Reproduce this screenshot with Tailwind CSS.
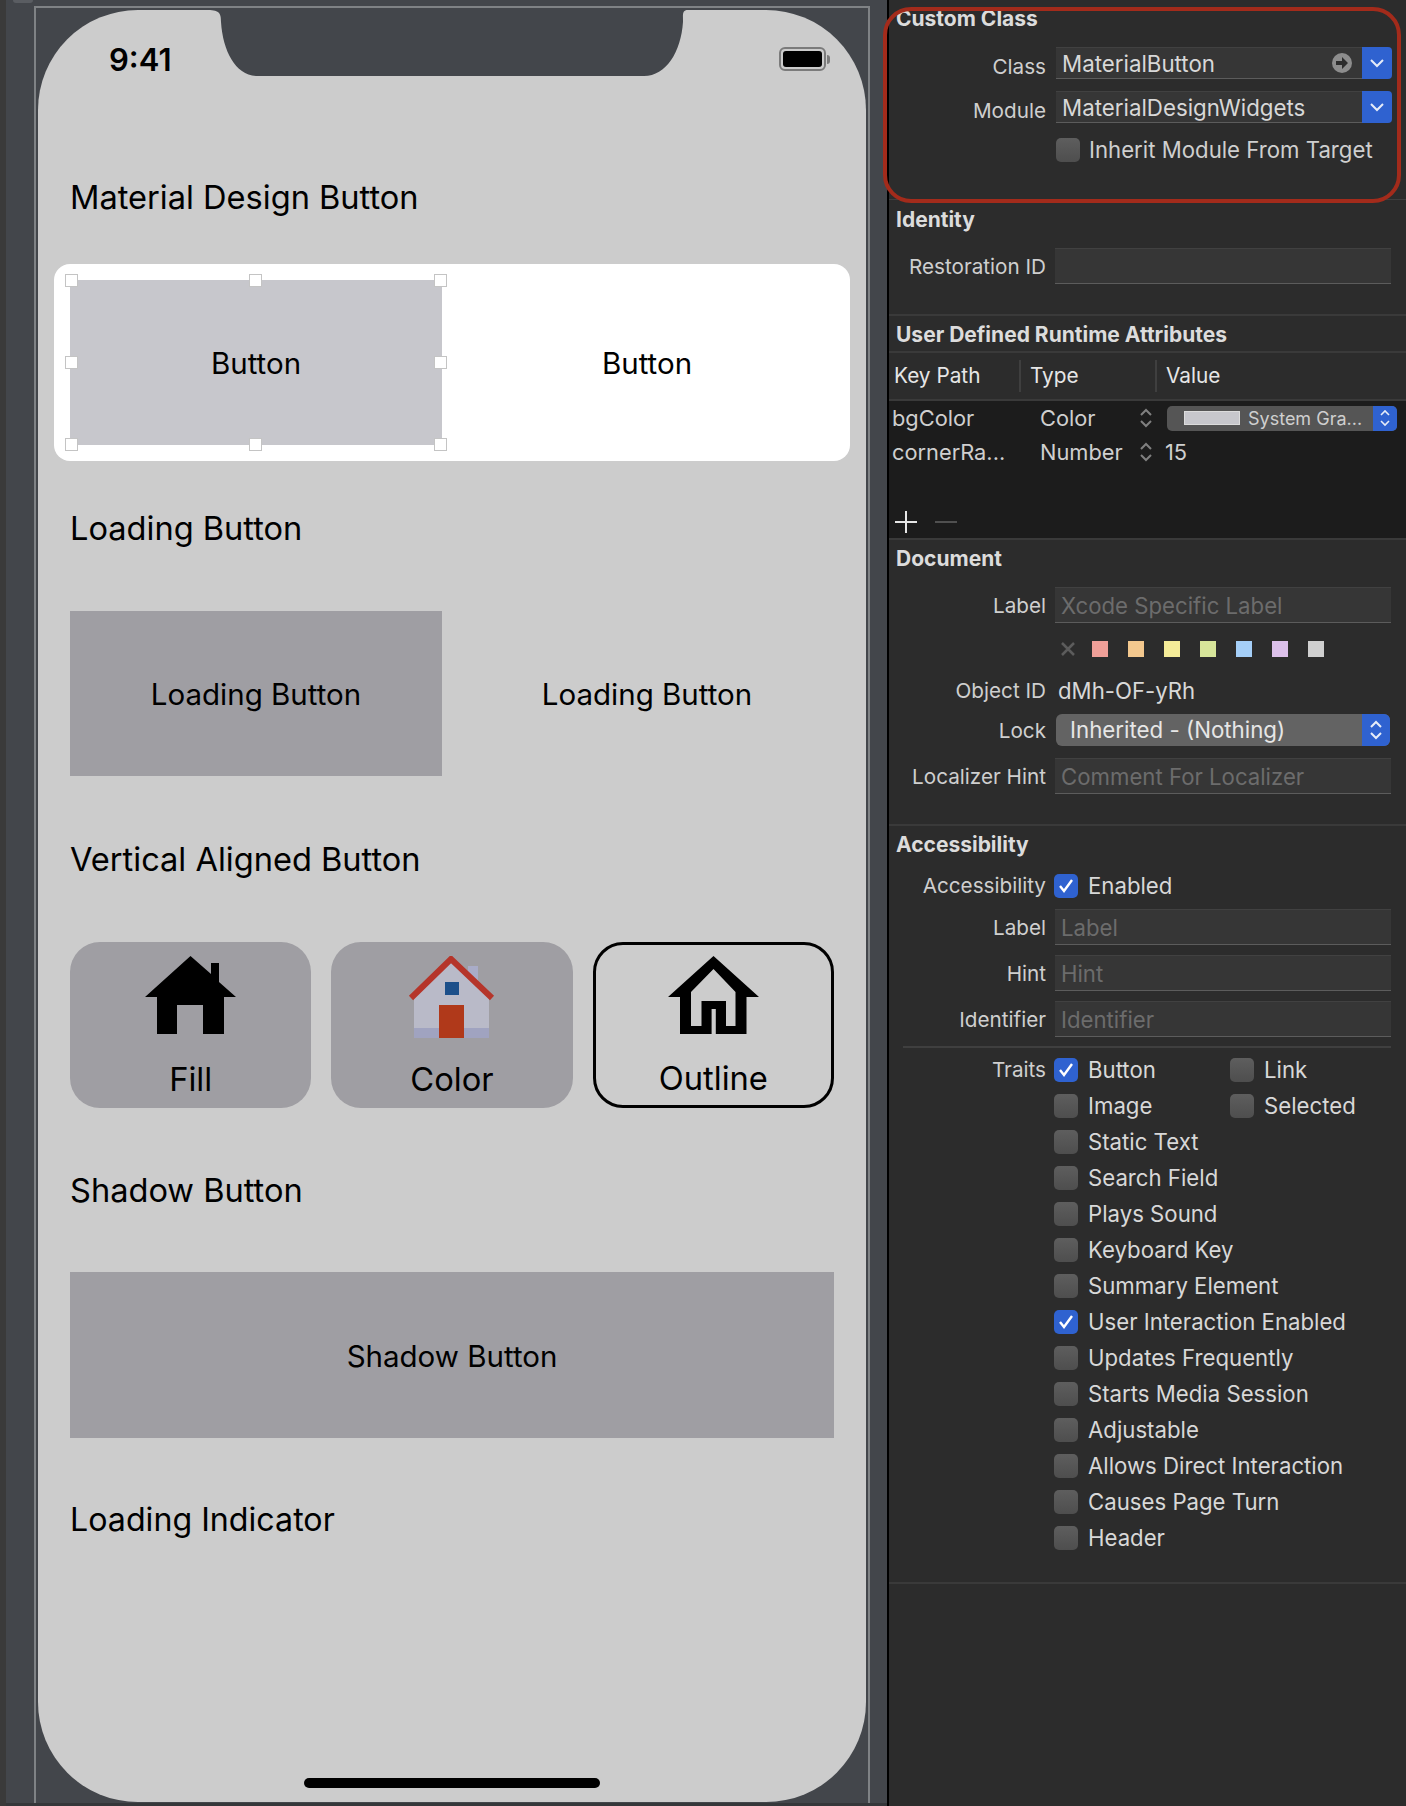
<!DOCTYPE html>
<html lang="en">
  <head>
    <meta charset="UTF-8" />
    <title>Interface Builder</title>
    <script src="https://cdn.jsdelivr.net/npm/@tailwindcss/browser@4"></script>
  </head>
  <body class="w-[1406px] h-[1806px] overflow-hidden bg-[#43464b] font-['Inter',sans-serif]">
    <div class="flex h-[1806px]">

      <!-- canvas -->
      <div class="relative w-[887px] h-[1806px] bg-[#43464b] pt-[6px] pl-[34px] border-l-[6px] border-[#3a3a3a] box-border">
        <div class="absolute left-[7px] top-0 w-[20px] h-[3px] rounded-b bg-[#5a5d62]"></div>
        <div class="absolute left-0 right-0 bottom-0 h-[3px] bg-[#35373a]"></div>
        <div class="-ml-[6px] w-[836px] h-[1797px] border-l-2 border-r-2 border-t-2 border-[#7f8285] pl-[2px] pt-[2px]">

          <!-- phone -->
          <div class="relative w-[828px] h-[1792px] rounded-[100px] bg-[#cccccc] overflow-hidden text-black">
            <!-- notch -->
            <svg class="absolute left-[170px] top-0" width="480" height="67" viewBox="0 0 480 67">
              <path fill="#43464b" d="M0,0 H480 C474,0 475,4 475,12 C473,42 458,66 436,66 H50 C28,66 15,42 13,12 C13,4 12,0 0,0 Z" />
            </svg>

            <!-- status bar -->
            <div class="flex justify-between h-[163px] pt-[32px] pl-[71px] pr-[36px]">
              <span class="text-[31px] leading-[36px] font-semibold">9:41</span>
              <div class="flex items-center h-[24px] mt-[5px]">
                <div class="w-[47px] h-[24px] rounded-[6px] border-2 border-[#7b7b7b] p-[2px]"><div class="w-full h-full rounded-[3px] bg-black"></div></div>
                <div class="w-[3px] h-[9px] ml-[1px] rounded-r bg-[#7b7b7b]"></div>
              </div>
            </div>

            <div class="pl-[32px] pr-[32px]">
              <!-- material design button -->
              <div class="h-[48px] flex items-center text-[32.6px]">Material Design Button</div>
              <div class="relative mt-[59px] grid grid-cols-[372px_1fr] gap-[18px] h-[165px] text-[29.5px]">
                <div class="absolute -left-[16px] -right-[16px] -top-[16px] -bottom-[16px] rounded-[16px] bg-white"></div>
                <div class="relative bg-[#c7c7cc] flex items-center justify-center pt-[2px]">Button
                  <span class="absolute -left-[5px] -top-[6px] w-[13px] h-[13px] bg-white border border-[#c4c4c4]"></span>
                  <span class="absolute left-[179px] -top-[6px] w-[13px] h-[13px] bg-white border border-[#c4c4c4]"></span>
                  <span class="absolute -right-[5px] -top-[6px] w-[13px] h-[13px] bg-white border border-[#c4c4c4]"></span>
                  <span class="absolute -left-[5px] top-[76px] w-[13px] h-[13px] bg-white border border-[#c4c4c4]"></span>
                  <span class="absolute -right-[5px] top-[76px] w-[13px] h-[13px] bg-white border border-[#c4c4c4]"></span>
                  <span class="absolute -left-[5px] -bottom-[6px] w-[13px] h-[13px] bg-white border border-[#c4c4c4]"></span>
                  <span class="absolute left-[179px] -bottom-[6px] w-[13px] h-[13px] bg-white border border-[#c4c4c4]"></span>
                  <span class="absolute -right-[5px] -bottom-[6px] w-[13px] h-[13px] bg-white border border-[#c4c4c4]"></span>
                </div>
                <div class="relative flex items-center justify-center pt-[2px]">Button</div>
              </div>

              <!-- loading button -->
              <div class="mt-[59px] h-[48px] flex items-center text-[32.6px]">Loading Button</div>
              <div class="mt-[59px] grid grid-cols-[372px_1fr] gap-[18px] h-[165px] text-[29.5px]">
                <div class="bg-[#9f9ea3] flex items-center justify-center pt-[2px]">Loading Button</div>
                <div class="flex items-center justify-center pt-[2px]">Loading Button</div>
              </div>

              <!-- vertical aligned button -->
              <div class="mt-[59px] h-[48px] flex items-center text-[32.6px]">Vertical Aligned Button</div>
              <div class="mt-[59px] grid grid-cols-3 gap-[20px] h-[166px] text-[32.7px]">
                <div class="relative rounded-[30px] bg-[#9f9ea3] flex flex-col items-center pt-[14px]">
                  <svg width="91" height="78" viewBox="0 0 91 78"><path d="M45.5,0 L66,18 V7 H74,V26 L91,41 H79 V78 H58 V49 H32 V78 H12 V41 H0 Z" /></svg>
                  <span class="mt-[23px] leading-[44px]">Fill</span>
                </div>
                <div class="relative rounded-[30px] bg-[#9f9ea3] flex flex-col items-center pt-[14px]">
                  <svg width="91" height="82" viewBox="0 0 91 82">
                    <rect x="62" y="10" width="10" height="30" fill="#a9acc8" />
                    <path fill="#b9bac8" d="M45,6 L83,42 V72 H8 V42 Z" />
                    <rect x="8" y="72" width="75" height="10" fill="#a0a3c0" />
                    <rect x="39" y="26" width="14" height="13" fill="#1c4f8a" />
                    <rect x="33" y="49" width="25" height="33" fill="#b0391a" />
                    <path fill="none" stroke="#b5352a" stroke-width="6" d="M5,42 L45,3 L86,42" />
                  </svg>
                  <span class="mt-[19px] leading-[44px]">Color</span>
                </div>
                <div class="relative rounded-[30px] border-[3px] border-black flex flex-col items-center pt-[11px]">
                  <svg width="91" height="78" viewBox="0 0 91 78"><path fill-rule="evenodd" d="M45.5,0 L91,41 H78.5 V78 H47.8 V53 H43.6 V78 H12 V41 H0 Z M45.5,13 L67.5,36 V70 H58 V45 H33.5 V70 H23 V36 Z" /></svg>
                  <span class="mt-[22px] leading-[44px]">Outline</span>
                </div>
              </div>

              <!-- shadow button -->
              <div class="mt-[58px] h-[48px] flex items-center text-[32.6px]">Shadow Button</div>
              <div class="mt-[58px] h-[166px] bg-[#9f9ea3] flex items-center justify-center pt-[2px] text-[29.5px]">Shadow Button</div>

              <!-- loading indicator -->
              <div class="mt-[58px] h-[48px] flex items-center text-[32.2px]">Loading Indicator</div>
            </div>

            <div class="absolute left-[266px] top-[1768px] w-[296px] h-[10px] rounded-full bg-black"></div>
          </div>
        </div>
      </div>

      <!-- inspector -->
      <div class="relative w-[519px] h-[1806px] border-l-2 border-black bg-[#2c2c2c] text-[20.7px] text-[#cfcfcf] box-border">
        <div class="absolute -left-[6px] top-[7px] w-[518px] h-[196px] rounded-[28px] border-[4px] border-[#a32b1b]"></div>

        <!-- custom class -->
        <section class="h-[200px] border-b border-[#3f3f3f] pl-[9px]">
          <h2 class="-ml-[2px] h-[38px] flex items-center text-[21px] font-bold text-[#dcdcdc]">Custom Class</h2>
          <div class="mt-[9px] flex items-center h-[32px]">
            <span class="w-[148px] text-right pt-[7px]">Class</span>
            <div class="ml-[10px] w-[336px] h-[32px] flex">
              <div class="flex-1 flex items-center justify-between pl-[6px] pr-[10px] bg-[#363636] border-t border-[#414141] border-b border-b-[#5c5c5c] text-[22.3px] text-[#d8d8d8]"><span class="pt-[2px]">MaterialButton</span>
                <svg width="20" height="20" viewBox="0 0 20 20"><circle cx="10" cy="10" r="10" fill="#8d8d8d" /><path fill="#2c2c2c" d="M4,8 H10 V4 L16,10 L10,16 V12 H4 Z" /></svg>
              </div>
              <div class="w-[30px] flex items-center justify-center rounded-r-[4px] bg-[#2f62d0]"><svg width="14" height="10" viewBox="0 0 14 10"><path fill="none" stroke="#e6ecf8" stroke-width="2" d="M1,2 L7,8 L13,2" /></svg></div>
            </div>
          </div>
          <div class="mt-[12px] flex items-center h-[32px]">
            <span class="w-[148px] text-right pt-[7px]">Module</span>
            <div class="ml-[10px] w-[336px] h-[32px] flex">
              <div class="flex-1 flex items-center pl-[6px] pt-[2px] bg-[#363636] border-t border-[#414141] border-b border-b-[#5c5c5c] text-[22.3px] text-[#d8d8d8]">MaterialDesignWidgets</div>
              <div class="w-[30px] flex items-center justify-center rounded-r-[4px] bg-[#2f62d0]"><svg width="14" height="10" viewBox="0 0 14 10"><path fill="none" stroke="#e6ecf8" stroke-width="2" d="M1,2 L7,8 L13,2" /></svg></div>
            </div>
          </div>
          <div class="mt-[15px] ml-[158px] flex items-center h-[24px]">
            <div class="w-[24px] h-[24px] rounded-[5px] bg-linear-to-b from-[#5e5e5e] to-[#4e4e4e]"></div>
            <span class="ml-[9px] text-[22.2px]">Inherit Module From Target</span>
          </div>
        </section>

        <!-- identity -->
        <section class="h-[116px] border-b-2 border-[#3a3a3a] pl-[9px]">
          <h2 class="-ml-[2px] h-[40px] flex items-center text-[21px] font-bold text-[#dcdcdc]">Identity</h2>
          <div class="mt-[8px] flex items-center h-[36px]">
            <span class="w-[148px] text-right pt-[2px]">Restoration ID</span>
            <div class="ml-[9px] w-[336px] h-[36px] bg-[#363636] border-t border-[#414141] border-b border-b-[#5c5c5c]"></div>
          </div>
        </section>

        <!-- runtime attributes -->
        <section class="h-[37px] border-b-2 border-[#3a3a3a] pl-[7px]">
          <h2 class="h-[37px] flex items-center text-[21px] font-bold text-[#dcdcdc]">User Defined Runtime Attributes</h2>
        </section>
        <div class="h-[48px] flex items-center border-b-2 border-[#3a3a3a] text-[20.8px] text-[#e6e6e6]">
          <span class="w-[132px] pl-[5px] h-[32px] flex items-center border-r-2 border-[#3f3f3f]">Key Path</span>
          <span class="w-[136px] pl-[9px] h-[32px] flex items-center border-r-2 border-[#3f3f3f]">Type</span>
          <span class="pl-[9px]">Value</span>
        </div>
        <div class="h-[139px] bg-[#1c1c1c] border-b-2 border-[#3a3a3a] text-[21.8px] text-[#cfcfcf]">
          <div class="flex items-center h-[34px]">
            <span class="w-[151px] pl-[3px]">bgColor</span>
            <span class="w-[99px]">Color</span>
            <svg width="14" height="22" viewBox="0 0 14 22"><path fill="none" stroke="#808080" stroke-width="2" d="M2,8 L7,3 L12,8 M2,14 L7,19 L12,14" /></svg>
            <div class="ml-[14px] w-[230px] h-[25px] flex rounded-[5px] overflow-hidden bg-[#555555] text-[18px]">
              <div class="flex-1 flex items-center pl-[17px]">
                <div class="w-[56px] h-[14px] bg-[#c7c7cc] border border-[#dcdcdc]"></div>
                <span class="ml-[8px]">System Gra...</span>
              </div>
              <div class="w-[24px] flex items-center justify-center bg-[#2f62d0]"><svg width="12" height="20" viewBox="0 0 12 20"><path fill="none" stroke="#e6ecf8" stroke-width="1.6" d="M2,7 L6,3 L10,7 M2,13 L6,17 L10,13" /></svg></div>
            </div>
          </div>
          <div class="flex items-center h-[34px]">
            <span class="w-[151px] pl-[3px]">cornerRa...</span>
            <span class="w-[99px]">Number</span>
            <svg width="14" height="22" viewBox="0 0 14 22"><path fill="none" stroke="#808080" stroke-width="2" d="M2,8 L7,3 L12,8 M2,14 L7,19 L12,14" /></svg>
            <span class="ml-[12px]">15</span>
          </div>
          <div class="mt-[36px] flex items-center pl-[6px] h-[34px]">
            <svg width="22" height="22" viewBox="0 0 22 22"><path stroke="#e6e6e6" stroke-width="2" d="M11,0 V22 M0,11 H22" /></svg>
            <div class="ml-[18px] w-[22px] h-[2px] bg-[#505050]"></div>
          </div>
        </div>

        <!-- document -->
        <section class="h-[286px] border-b-2 border-[#3a3a3a] pl-[9px]">
          <h2 class="-ml-[2px] h-[38px] flex items-center text-[21px] font-bold text-[#dcdcdc]">Document</h2>
          <div class="mt-[9px] flex items-center h-[36px]">
            <span class="w-[148px] text-right pt-[2px]">Label</span>
            <div class="ml-[9px] w-[336px] h-[36px] flex items-center pl-[6px] pt-[2px] bg-[#363636] border-t border-[#414141] border-b border-b-[#5c5c5c] text-[22.2px] text-[#6c6c6c]">Xcode Specific Label</div>
          </div>
          <div class="mt-[18px] ml-[163px] flex items-center h-[16px]">
            <svg class="mr-[17px]" width="14" height="14" viewBox="0 0 14 14"><path stroke="#5c5c5c" stroke-width="2.5" d="M1,1 L13,13 M13,1 L1,13" /></svg>
            <div class="w-[16px] h-[16px] bg-[#ef9f98]"></div>
            <div class="ml-[20px] w-[16px] h-[16px] bg-[#f3c88e]"></div>
            <div class="ml-[20px] w-[16px] h-[16px] bg-[#f5ec98]"></div>
            <div class="ml-[20px] w-[16px] h-[16px] bg-[#d7e59a]"></div>
            <div class="ml-[20px] w-[16px] h-[16px] bg-[#a5cff8]"></div>
            <div class="ml-[20px] w-[16px] h-[16px] bg-[#dcc0ea]"></div>
            <div class="ml-[20px] w-[16px] h-[16px] bg-[#d0d0d0]"></div>
          </div>
          <div class="mt-[18px] flex items-center h-[32px]">
            <span class="w-[148px] text-right">Object ID</span>
            <span class="ml-[12px] text-[22.2px] text-[#d8d8d8]">dMh-OF-yRh</span>
          </div>
          <div class="mt-[7px] flex items-center h-[32px]">
            <span class="w-[148px] text-right pt-[1px]">Lock</span>
            <div class="ml-[10px] w-[334px] h-[32px] flex rounded-[6px] overflow-hidden bg-[#636363] text-[22.3px] text-[#e6e6e6]">
              <div class="flex-1 flex items-center pl-[14px]">Inherited - (Nothing)</div>
              <div class="w-[28px] flex items-center justify-center bg-[#2f62d0]"><svg width="14" height="24" viewBox="0 0 14 24"><path fill="none" stroke="#e6ecf8" stroke-width="2" d="M2,9 L7,4 L12,9 M2,15 L7,20 L12,15" /></svg></div>
            </div>
          </div>
          <div class="mt-[12px] flex items-center h-[36px]">
            <span class="w-[148px] text-right pt-[2px]">Localizer Hint</span>
            <div class="ml-[9px] w-[336px] h-[36px] flex items-center pl-[6px] pt-[2px] bg-[#363636] border-t border-[#414141] border-b border-b-[#5c5c5c] text-[22.2px] text-[#6c6c6c]">Comment For Localizer</div>
          </div>
        </section>

        <!-- accessibility -->
        <section class="h-[758px] border-b-2 border-[#3a3a3a] pl-[9px]">
          <h2 class="-ml-[2px] h-[38px] flex items-center text-[21px] font-bold text-[#dcdcdc]">Accessibility</h2>
          <div class="mt-[10px] flex items-center h-[24px]">
            <span class="w-[148px] text-right">Accessibility</span>
            <div class="ml-[8px] w-[24px] h-[24px] rounded-[5px] bg-[#2f62d0] flex items-center justify-center"><svg width="16" height="14" viewBox="0 0 16 14"><path fill="none" stroke="#fff" stroke-width="2.4" d="M2,7 L6,12 L14,1" /></svg></div>
            <span class="ml-[10px] text-[22.2px] text-[#d8d8d8]">Enabled</span>
          </div>
          <div class="mt-[11px] flex items-center h-[36px]">
            <span class="w-[148px] text-right pt-[2px]">Label</span>
            <div class="ml-[9px] w-[336px] h-[36px] flex items-center pl-[6px] pt-[2px] bg-[#363636] border-t border-[#414141] border-b border-b-[#5c5c5c] text-[22.2px] text-[#6c6c6c]">Label</div>
          </div>
          <div class="mt-[10px] flex items-center h-[36px]">
            <span class="w-[148px] text-right pt-[2px]">Hint</span>
            <div class="ml-[9px] w-[336px] h-[36px] flex items-center pl-[6px] pt-[2px] bg-[#363636] border-t border-[#414141] border-b border-b-[#5c5c5c] text-[22.2px] text-[#6c6c6c]">Hint</div>
          </div>
          <div class="mt-[10px] flex items-center h-[36px]">
            <span class="w-[148px] text-right pt-[2px]">Identifier</span>
            <div class="ml-[9px] w-[336px] h-[36px] flex items-center pl-[6px] pt-[2px] bg-[#363636] border-t border-[#414141] border-b border-b-[#5c5c5c] text-[22.2px] text-[#6c6c6c]">Identifier</div>
          </div>
          <div class="mt-[9px] ml-[5px] w-[488px] h-[2px] bg-[#3f3f3f]"></div>

          <!-- traits -->
          <div class="mt-[10px] flex items-center h-[24px] text-[22.2px] text-[#d8d8d8]">
            <span class="w-[148px] text-right text-[20.7px] text-[#cfcfcf]">Traits</span>
            <div class="ml-[8px] w-[24px] h-[24px] rounded-[5px] bg-[#2f62d0] flex items-center justify-center"><svg width="16" height="14" viewBox="0 0 16 14"><path fill="none" stroke="#fff" stroke-width="2.4" d="M2,7 L6,12 L14,1" /></svg></div>
            <span class="ml-[10px] w-[142px]">Button</span>
            <div class="w-[24px] h-[24px] rounded-[5px] bg-linear-to-b from-[#5e5e5e] to-[#4e4e4e]"></div>
            <span class="ml-[10px]">Link</span>
          </div>
          <div class="mt-[12px] ml-[156px] flex items-center h-[24px] text-[22.2px] text-[#d8d8d8]">
            <div class="w-[24px] h-[24px] rounded-[5px] bg-linear-to-b from-[#5e5e5e] to-[#4e4e4e]"></div>
            <span class="ml-[10px] w-[142px]">Image</span>
            <div class="w-[24px] h-[24px] rounded-[5px] bg-linear-to-b from-[#5e5e5e] to-[#4e4e4e]"></div>
            <span class="ml-[10px]">Selected</span>
          </div>
          <div class="mt-[12px] ml-[156px] flex items-center h-[24px] text-[22.2px] text-[#d8d8d8]"><div class="w-[24px] h-[24px] rounded-[5px] bg-linear-to-b from-[#5e5e5e] to-[#4e4e4e]"></div><span class="ml-[10px]">Static Text</span></div>
          <div class="mt-[12px] ml-[156px] flex items-center h-[24px] text-[22.2px] text-[#d8d8d8]"><div class="w-[24px] h-[24px] rounded-[5px] bg-linear-to-b from-[#5e5e5e] to-[#4e4e4e]"></div><span class="ml-[10px]">Search Field</span></div>
          <div class="mt-[12px] ml-[156px] flex items-center h-[24px] text-[22.2px] text-[#d8d8d8]"><div class="w-[24px] h-[24px] rounded-[5px] bg-linear-to-b from-[#5e5e5e] to-[#4e4e4e]"></div><span class="ml-[10px]">Plays Sound</span></div>
          <div class="mt-[12px] ml-[156px] flex items-center h-[24px] text-[22.2px] text-[#d8d8d8]"><div class="w-[24px] h-[24px] rounded-[5px] bg-linear-to-b from-[#5e5e5e] to-[#4e4e4e]"></div><span class="ml-[10px]">Keyboard Key</span></div>
          <div class="mt-[12px] ml-[156px] flex items-center h-[24px] text-[22.2px] text-[#d8d8d8]"><div class="w-[24px] h-[24px] rounded-[5px] bg-linear-to-b from-[#5e5e5e] to-[#4e4e4e]"></div><span class="ml-[10px]">Summary Element</span></div>
          <div class="mt-[12px] ml-[156px] flex items-center h-[24px] text-[22.2px] text-[#d8d8d8]"><div class="w-[24px] h-[24px] rounded-[5px] bg-[#2f62d0] flex items-center justify-center"><svg width="16" height="14" viewBox="0 0 16 14"><path fill="none" stroke="#fff" stroke-width="2.4" d="M2,7 L6,12 L14,1" /></svg></div><span class="ml-[10px]">User Interaction Enabled</span></div>
          <div class="mt-[12px] ml-[156px] flex items-center h-[24px] text-[22.2px] text-[#d8d8d8]"><div class="w-[24px] h-[24px] rounded-[5px] bg-linear-to-b from-[#5e5e5e] to-[#4e4e4e]"></div><span class="ml-[10px]">Updates Frequently</span></div>
          <div class="mt-[12px] ml-[156px] flex items-center h-[24px] text-[22.2px] text-[#d8d8d8]"><div class="w-[24px] h-[24px] rounded-[5px] bg-linear-to-b from-[#5e5e5e] to-[#4e4e4e]"></div><span class="ml-[10px]">Starts Media Session</span></div>
          <div class="mt-[12px] ml-[156px] flex items-center h-[24px] text-[22.2px] text-[#d8d8d8]"><div class="w-[24px] h-[24px] rounded-[5px] bg-linear-to-b from-[#5e5e5e] to-[#4e4e4e]"></div><span class="ml-[10px]">Adjustable</span></div>
          <div class="mt-[12px] ml-[156px] flex items-center h-[24px] text-[22.2px] text-[#d8d8d8]"><div class="w-[24px] h-[24px] rounded-[5px] bg-linear-to-b from-[#5e5e5e] to-[#4e4e4e]"></div><span class="ml-[10px]">Allows Direct Interaction</span></div>
          <div class="mt-[12px] ml-[156px] flex items-center h-[24px] text-[22.2px] text-[#d8d8d8]"><div class="w-[24px] h-[24px] rounded-[5px] bg-linear-to-b from-[#5e5e5e] to-[#4e4e4e]"></div><span class="ml-[10px]">Causes Page Turn</span></div>
          <div class="mt-[12px] ml-[156px] flex items-center h-[24px] text-[22.2px] text-[#d8d8d8]"><div class="w-[24px] h-[24px] rounded-[5px] bg-linear-to-b from-[#5e5e5e] to-[#4e4e4e]"></div><span class="ml-[10px]">Header</span></div>
        </section>
      </div>
    </div>
  </body>
</html>
